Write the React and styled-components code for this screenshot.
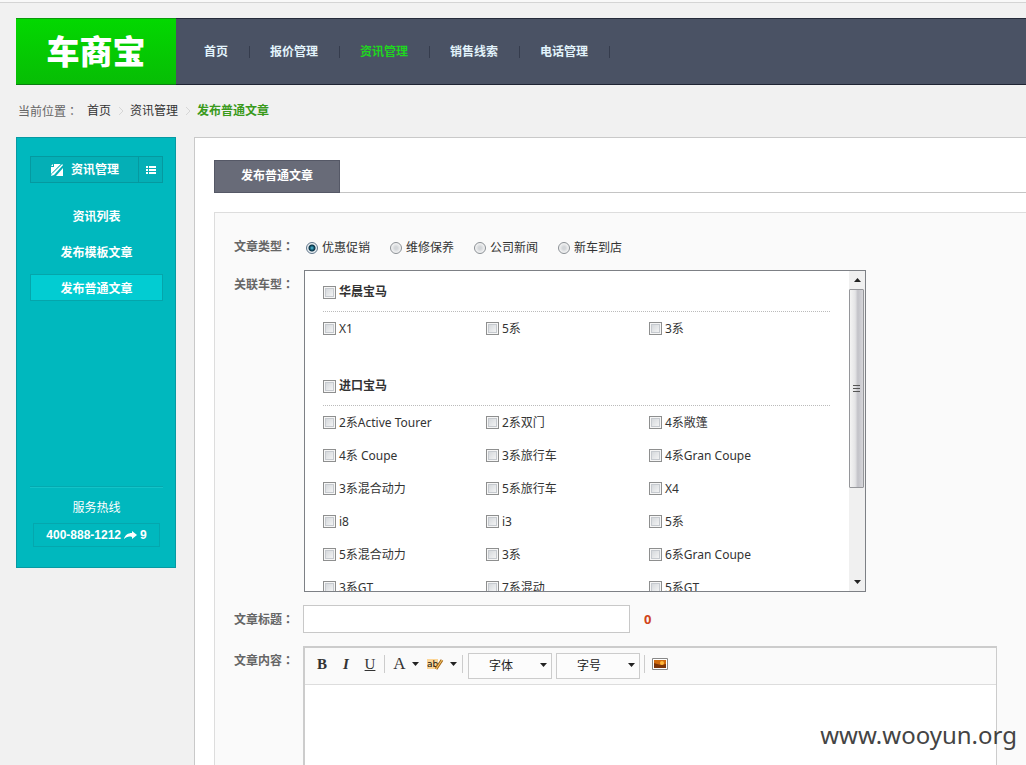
import { useState } from "react";
import styled, { createGlobalStyle } from "styled-components";

const GlobalStyle = createGlobalStyle`
  * {
    box-sizing: border-box;
  }
  body {
    margin: 0;
    background: #f1f1f1;
    color: #333;
    font: 12px/18px "Noto Sans", "Noto Sans CJK SC", sans-serif;
  }
  button, input, select {
    margin: 0;
    font: inherit;
    color: inherit;
  }
  a {
    color: inherit;
    text-decoration: none;
  }
`;

const Page = styled.div`
  position: relative;
  min-height: 100vh;
  display: flex;
  flex-direction: column;
  padding-left: 16px;
`;

const TopLine = styled.div`
  height: 3px;
  margin: 0 0 15px -16px;
  background: #f8f8f8;
  border-bottom: 1px solid #d4d4d4;
`;

const Header = styled.header`
  display: flex;
  height: 67px;
  background: #4a5264;
  border-top: 1px solid #252b3a;
  border-bottom: 1px solid #1f2433;
`;

const Logo = styled.a`
  width: 160px;
  margin: -1px 0;
  padding-bottom: 4px;
  display: flex;
  align-items: center;
  justify-content: center;
  border-top: 1px solid #0a9a0c;
  border-bottom: 1px solid #0b7d10;
  background: linear-gradient(#03d800, #07bd05);
  color: #fff;
  font-family: "Noto Sans CJK SC", sans-serif;
  font-size: 33px;
  line-height: 40px;
  font-weight: 900;
`;

const Nav = styled.nav`
  display: flex;
  align-items: center;
  padding-left: 8px;
`;

const NavLink = styled.a`
  padding: 0 21px 0 20px;
  font-weight: bold;
  line-height: 12px;
  border-right: 1px solid #353c4d;
  color: ${(p) => (p.$active ? "#1fd61f" : "#e2f3fb")};
`;

const Crumbs = styled.nav`
  display: flex;
  align-items: center;
  height: 52px;
  padding-left: 2px;
  color: #666;
`;

const CrumbLink = styled.a`
  color: #333;
`;

const CrumbStart = styled(CrumbLink)`
  margin-left: 9px;
`;

const CrumbHere = styled.b`
  color: #3a9a1c;
`;

const Chevron = styled.svg`
  width: 6px;
  height: 10px;
  margin: 0 6px 0 7px;
  fill: none;
  stroke: #d6d6d6;
`;

// the TC face centres the full-width colon in its cell
const Colon = styled.span`
  font-family: "Noto Sans CJK TC", sans-serif;
`;

const Columns = styled.div`
  flex: 1;
  display: flex;
  align-items: stretch;
  gap: 18px;
`;

const Sidebar = styled.aside`
  width: 160px;
  height: 431px;
  flex: none;
  display: flex;
  flex-direction: column;
  padding: 18px 12px 20px 13px;
  background: #00b8be;
  border: 1px solid #079aa3;
  color: #fff;
`;

const SideTitle = styled.div`
  display: flex;
  height: 27px;
  margin-bottom: 19px;
  border: 1px solid #0599a0;
  background: #04afb6;
  font-weight: bold;
`;

const SideName = styled.a`
  flex: 1;
  display: flex;
  align-items: center;
  justify-content: center;
  gap: 7px;
`;

const ListButton = styled.button`
  width: 24px;
  padding: 0;
  display: flex;
  align-items: center;
  justify-content: center;
  border: 0;
  border-left: 1px solid #0599a0;
  background: none;
`;

const SideLink = styled.a`
  height: 27px;
  margin-bottom: 9px;
  line-height: 27px;
  text-align: center;
  font-weight: bold;
  border: 1px solid ${(p) => (p.$active ? "#05a5ab" : "transparent")};
  background: ${(p) => (p.$active ? "#02ccd2" : "none")};
`;

const Hotline = styled.div`
  margin-top: auto;
  padding: 12px 3px 0;
  border-top: 1px solid #04a9b0;
  text-align: center;
  box-shadow: inset 0 1px 0 #14c3c8;
`;

const Phone = styled.div`
  height: 24px;
  margin-top: 6px;
  display: flex;
  align-items: center;
  justify-content: center;
  gap: 3px;
  border: 1px solid #04a7ae;
  font-family: "Liberation Sans", sans-serif;
  font-size: 12px;
  font-weight: bold;
`;

const Main = styled.main`
  flex: 1;
  min-width: 0;
  display: flex;
  flex-direction: column;
  padding: 22px 0 0 19px;
  background: #fff;
  border: 1px solid #c9c9c9;
  border-width: 1px 0 0 1px;
`;

const Tabs = styled.div`
  display: flex;
  height: 33px;
  margin-bottom: 19px;
  border-bottom: 1px solid #c4c4c4;
`;

const Tab = styled.button`
  width: 126px;
  height: 33px;
  padding: 0 0 2px;
  border: 1px solid #555866;
  background: #686b78;
  color: #fff;
  font-weight: bold;
`;

const Form = styled.form`
  flex: 1;
  display: flex;
  flex-direction: column;
  padding: 24px 29px 0 19px;
  border: 1px solid #ddd;
  border-width: 1px 0 0 1px;
  background: #fafafa;
`;

const Row = styled.div`
  display: flex;
  flex: ${(p) => (p.$grow ? "1 0 118px" : "none")};
  margin-bottom: ${(p) => p.$gap || 0}px;
`;

const RowLabel = styled.label`
  width: ${(p) => (p.$wide ? 70 : 69)}px;
  flex: none;
  padding-top: ${(p) => p.$top || 0}px;
  color: #666;
  font-weight: bold;
`;

const Radios = styled.div`
  display: flex;
  gap: 20px;
  padding: 2px 0 0 2px;
`;

const Choice = styled.label`
  display: flex;
  align-items: center;
  gap: 3px;
  font-weight: ${(p) => (p.$bold ? "bold" : "normal")};
`;

const Radio = styled.input`
  appearance: none;
  width: 12px;
  height: 12px;
  margin-right: 1px;
  border: 1px solid #8a8f94;
  border-radius: 50%;
  background: radial-gradient(circle, #d3d6d9 20%, #f8f8f8 75%);
  &:checked {
    border-color: #5f7489;
    background: radial-gradient(circle at 50% 50%, #5cc9e3 0, #12566f 2px, #0d3346 3px, #e8eef2 4px);
  }
`;

const Check = styled.input`
  appearance: none;
  width: 13px;
  height: 13px;
  flex: none;
  border: 1px solid #8e8f8f;
  background: linear-gradient(135deg, #ced2d6, #fafafa);
  box-shadow: inset 0 0 0 1px #f6f6f6, inset 0 0 0 2px #c6cacf;
  &:checked {
    background: #24598c;
  }
`;

const CarBox = styled.div`
  width: 562px;
  height: 322px;
  display: flex;
  border: 1px solid #7d8085;
  background: #fff;
`;

const CarList = styled.div`
  flex: 1;
  overflow-y: auto;
  scrollbar-width: none;
  padding: 0 19px 0 18px;
`;

const CarGroup = styled.section`
  padding-bottom: 20px;
`;

const GroupHead = styled.div`
  height: 41px;
  padding-top: 12px;
  border-bottom: 1px dotted #bbb;
`;

const CarGrid = styled.div`
  display: grid;
  grid-template-columns: repeat(3, 163px);
  grid-auto-rows: 33px;
`;

const ScrollBar = styled.div`
  width: 16px;
  display: flex;
  flex-direction: column;
  background: #f0f0f0;
`;

const ScrollArrow = styled.button`
  height: 18px;
  padding: 0;
  border: 0;
  background: none;
  display: flex;
  align-items: center;
  justify-content: center;
`;

const Thumb = styled.div`
  height: 199px;
  margin: 0 1px 0 0;
  display: flex;
  align-items: center;
  justify-content: center;
  border: 1px solid #95969a;
  border-radius: 1px;
  background: linear-gradient(90deg, #f4f4f4, #e4e4e6 40%, #c2c2c8 60%, #d6d6da);
`;

const Track = styled.div`
  flex: 1;
`;

const TitleInput = styled.input`
  width: 327px;
  height: 28px;
  padding: 0 6px;
  border: 1px solid #c8c8c8;
  background: #fff;
`;

const Count = styled.output`
  margin-left: 14px;
  line-height: 28px;
  color: #d0451b;
  font-size: 13px;
  font-weight: bold;
`;

const Editor = styled.div`
  flex: 1;
  display: flex;
  flex-direction: column;
  border: 1px solid #ccc;
  border-width: 2px 1px 0 2px;
  background: #fff;
`;

const Toolbar = styled.div`
  height: 37px;
  display: flex;
  align-items: center;
  padding-left: 5px;
  border-bottom: 1px solid #ddd;
  background: #fafafa;
`;

const Tool = styled.button`
  height: 24px;
  width: ${(p) => p.$width || 24}px;
  margin-bottom: 4px;
  padding: 0;
  display: flex;
  align-items: center;
  justify-content: center;
  gap: 6px;
  border: 0;
  background: none;
  color: #333;
  font: ${(p) => p.$face || "bold"} ${(p) => p.$size || 15}px/20px "Liberation Serif", serif;
  text-decoration: ${(p) => (p.$line ? "underline" : "none")};
`;

const Separator = styled.span`
  width: 1px;
  height: 18px;
  margin: 0 ${(p) => p.$after || 3}px 4px ${(p) => p.$before || 2}px;
  background: #ccc;
`;

const SelectWrap = styled.span`
  position: relative;
  margin-right: ${(p) => (p.$last ? 2 : 4)}px;
  svg {
    position: absolute;
    right: 5px;
    top: 10px;
    pointer-events: none;
  }
`;

const Select = styled.select`
  appearance: none;
  display: block;
  width: 84px;
  height: 26px;
  padding: 0 20px;
  border: 1px solid #ccc;
  border-radius: 0;
  background: #fcfcfc;
  color: #222;
`;

const Area = styled.div`
  flex: 1;
  padding: 8px;
  outline: none;
`;

const Watermark = styled.span`
  position: absolute;
  right: 9px;
  bottom: 14px;
  color: #444;
  font: 24px/32px "Noto Sans", sans-serif;
`;

const navItems = ["首页", "报价管理", "资讯管理", "销售线索", "电话管理"];
const sideItems = ["资讯列表", "发布模板文章", "发布普通文章"];
const articleTypes = ["优惠促销", "维修保养", "公司新闻", "新车到店"];
const carGroups = [
  { name: "华晨宝马", cars: ["X1", "5系", "3系"] },
  {
    name: "进口宝马",
    cars: [
      "2系Active Tourer", "2系双门", "4系敞篷",
      "4系 Coupe", "3系旅行车", "4系Gran Coupe",
      "3系混合动力", "5系旅行车", "X4",
      "i8", "i3", "5系",
      "5系混合动力", "3系", "6系Gran Coupe",
      "3系GT", "7系混动", "5系GT",
    ],
  },
];

const Arrow = ({ up }) => (
  <svg width="7" height="4" viewBox="0 0 7 4" fill="#222">
    <path d={up ? "M0 4 3.500 0 7 4Z" : "M0 0h7L3.500 4Z"} />
  </svg>
);

const Crumb = () => (
  <Chevron viewBox="0 0 6 10">
    <path d="M1 1l4 4-4 4" />
  </Chevron>
);

const App = () => {
  const [type, setType] = useState(articleTypes[0]);
  const [title, setTitle] = useState("");

  return (
    <Page>
      <GlobalStyle />
      <TopLine />
      <Header>
        <Logo href="#">车商宝</Logo>
        <Nav>
          {navItems.map((item) => (
            <NavLink key={item} href="#" $active={item === "资讯管理"}>{item}</NavLink>
          ))}
        </Nav>
      </Header>
      <Crumbs>
        <span>当前位置<Colon>：</Colon></span>
        <CrumbStart href="#">首页</CrumbStart>
        <Crumb />
        <CrumbLink href="#">资讯管理</CrumbLink>
        <Crumb />
        <CrumbHere>发布普通文章</CrumbHere>
      </Crumbs>
      <Columns>
        <Sidebar>
          <SideTitle>
            <SideName href="#">
              <svg width="14" height="14" viewBox="0 0 14 14">
                <path fill="#fff" d="M4 1h7L1 11V4h3z" />
                <path fill="#fff" d="M3 1v2H1z" />
                <path fill="#fff" d="M12 1l1 1-9 10-3 1 1-3z" />
                <path fill="#fff" d="M13 5v8H6z" />
                <path stroke="#04afb6" d="M11.500 1 2 10.500" />
              </svg>
              资讯管理
            </SideName>
            <ListButton type="button" aria-label="list">
              <svg width="10" height="8" viewBox="0 0 10 8" fill="#fff">
                <path d="M0 0h2v2H0zM3 0h7v2H3zM0 3h2v2H0zM3 3h7v2H3zM0 6h2v2H0zM3 6h7v2H3z" />
              </svg>
            </ListButton>
          </SideTitle>
          {sideItems.map((item) => (
            <SideLink key={item} href="#" $active={item === "发布普通文章"}>{item}</SideLink>
          ))}
          <Hotline>
            服务热线
            <Phone>
              400-888-1212
              <svg width="13" height="9" viewBox="0 0 13 9" fill="#fff">
                <path d="M8 0l5 4-5 4V6C5 5 2 6 0 8c1-4 4-6 8-6z" />
              </svg>
              9
            </Phone>
          </Hotline>
        </Sidebar>
        <Main>
          <Tabs>
            <Tab type="button">发布普通文章</Tab>
          </Tabs>
          <Form onSubmit={(e) => e.preventDefault()}>
            <Row $gap={13}>
              <RowLabel as="span" $wide>文章类型<Colon>：</Colon></RowLabel>
              <Radios>
                {articleTypes.map((item) => (
                  <Choice key={item}>
                    <Radio type="radio" name="type" checked={type === item} onChange={() => setType(item)} />
                    {item}
                  </Choice>
                ))}
              </Radios>
            </Row>
            <Row $gap={13}>
              <RowLabel as="span" $wide $top={5}>关联车型<Colon>：</Colon></RowLabel>
              <CarBox>
                <CarList>
                  {carGroups.map((group) => (
                    <CarGroup key={group.name}>
                      <GroupHead>
                        <Choice $bold>
                          <Check type="checkbox" />
                          {group.name}
                        </Choice>
                      </GroupHead>
                      <CarGrid>
                        {group.cars.map((car) => (
                          <Choice key={car}>
                            <Check type="checkbox" />
                            {car}
                          </Choice>
                        ))}
                      </CarGrid>
                    </CarGroup>
                  ))}
                </CarList>
                <ScrollBar>
                  <ScrollArrow type="button" aria-label="up"><Arrow up /></ScrollArrow>
                  <Thumb>
                    <svg width="7" height="8" viewBox="0 0 7 8" stroke="#555">
                      <path d="M0 .5h7M0 3.500h7M0 6.500h7" />
                    </svg>
                  </Thumb>
                  <Track />
                  <ScrollArrow type="button" aria-label="down"><Arrow /></ScrollArrow>
                </ScrollBar>
              </CarBox>
            </Row>
            <Row $gap={13}>
              <RowLabel htmlFor="title" $top={5}>文章标题<Colon>：</Colon></RowLabel>
              <TitleInput id="title" value={title} onChange={(e) => setTitle(e.target.value)} />
              <Count htmlFor="title">{title.length}</Count>
            </Row>
            <Row $grow>
              <RowLabel as="span" id="content-label" $top={5}>文章内容<Colon>：</Colon></RowLabel>
              <Editor>
                <Toolbar>
                  <Tool type="button">B</Tool>
                  <Tool type="button" $face="italic bold">I</Tool>
                  <Tool type="button" $face="normal" $line>U</Tool>
                  <Separator />
                  <Tool type="button" $width={36} $face="normal" $size={17}>A <Arrow /></Tool>
                  <Tool type="button" $width={36} aria-label="highlight">
                    <svg width="17" height="13" viewBox="0 0 17 13">
                      <path fill="#fcd596" d="M0 1h11v10H0z" />
                      <text x="0" y="9" fontFamily="DejaVu Sans" fontSize="9" fontWeight="normal" fill="#111">ab</text>
                      <path stroke="#a8681c" strokeWidth="3" d="M15 2 9 11" />
                      <path stroke="#f6cf6e" d="M15 2 9 11" />
                    </svg>
                    <Arrow />
                  </Tool>
                  <Separator $after={5} />
                  <SelectWrap>
                    <Select aria-label="字体"><option>字体</option></Select>
                    <Arrow />
                  </SelectWrap>
                  <SelectWrap $last>
                    <Select aria-label="字号"><option>字号</option></Select>
                    <Arrow />
                  </SelectWrap>
                  <Separator />
                  <Tool type="button" aria-label="image">
                    <svg width="16" height="12" viewBox="0 0 16 12">
                      <path fill="#fff" stroke="#888" d="M.5.500h15v11H.5z" />
                      <path fill="#d06a0c" d="M2 2h12v8H2z" />
                      <path fill="#7d3508" d="M2 5l3 1 4 1 5-1v4H2z" />
                      <circle cx="10" cy="5" r="2" fill="#ffb93b" />
                    </svg>
                  </Tool>
                </Toolbar>
                <Area contentEditable suppressContentEditableWarning role="textbox" aria-labelledby="content-label" />
              </Editor>
            </Row>
          </Form>
        </Main>
      </Columns>
      <Watermark>www.wooyun.org</Watermark>
    </Page>
  );
};

export default App;
